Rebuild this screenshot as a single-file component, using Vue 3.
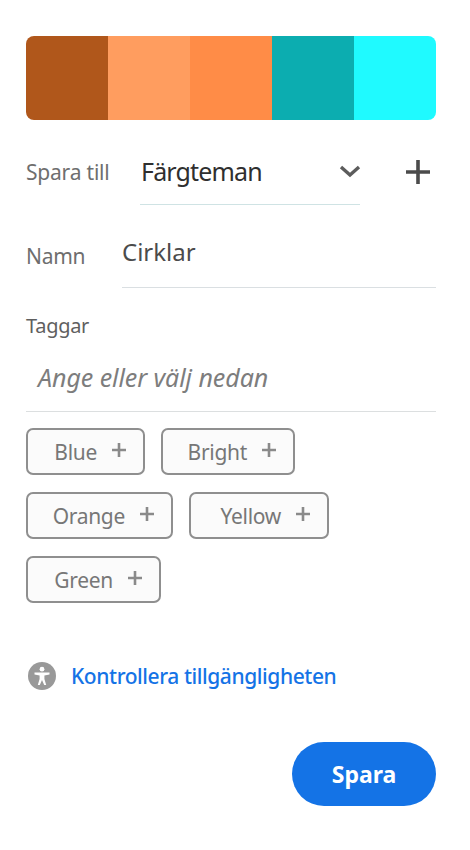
<script setup>
const swatches = ['#b0571b', '#ff9d5f', '#ff8c47', '#0cadb0', '#1ffaff']
const tagRows = [
  [{ name: 'Blue', w: 119 }, { name: 'Bright', w: 134 }],
  [{ name: 'Orange', w: 147 }, { name: 'Yellow', w: 140 }],
  [{ name: 'Green', w: 135 }]
]
</script>

<template>
  <main class="panel">
    <div class="swatches">
      <div v-for="c in swatches" :key="c" class="swatch" :style="{ background: c }"></div>
    </div>

    <div class="save-row">
      <span class="label save-label">Spara till</span>
      <div class="select">
        <span class="select-text">Färgteman</span>
        <svg class="chevron" width="22" height="14" viewBox="0 0 22 14">
          <path d="M2 3 L11 11 L20 3" fill="none" stroke="#5c5c5c" stroke-width="3.4" />
        </svg>
      </div>
      <svg class="add" width="26" height="26" viewBox="0 0 26 26">
        <path d="M13 1 V25 M1 13 H25" fill="none" stroke="#4b4b4b" stroke-width="3.6" />
      </svg>
    </div>

    <div class="name-row">
      <span class="label name-label">Namn</span>
      <div class="name-field">Cirklar</div>
    </div>

    <div class="label tags-label">Taggar</div>
    <div class="tag-input">Ange eller välj nedan</div>

    <div class="tags">
      <div v-for="(row, i) in tagRows" :key="i" class="tag-row">
        <div v-for="t in row" :key="t.name" class="tag" :style="{ width: t.w + 'px' }">
          <span class="tag-name">{{ t.name }}</span>
          <svg width="16" height="16" viewBox="0 0 16 16">
            <path d="M8 1 V15 M1 8 H15" fill="none" stroke="#8a8a8a" stroke-width="2.6" />
          </svg>
        </div>
      </div>
    </div>

    <div class="a11y">
      <svg width="30" height="30" viewBox="0 0 30 30">
        <circle cx="15" cy="15" r="14" fill="#999" />
        <circle cx="15" cy="8.2" r="2.4" fill="#fff" />
        <path d="M7.5 11.6 H22.5 V13.5 L17.4 14.6 V18 L19.2 24 H17.2 L15 19 L12.8 24 H10.8 L12.6 18 V14.6 L7.5 13.5 Z" fill="#fff" />
      </svg>
      <span class="link">Kontrollera tillgängligheten</span>
    </div>

    <div class="actions">
      <button class="save">Spara</button>
    </div>
  </main>
</template>

<style>
html, body { margin: 0; background: #fff; }
</style>

<style scoped>
.panel {
  box-sizing: border-box;
  width: 470px;
  height: 850px;
  padding: 36px 34px 0 26px;
  font-family: "Noto Sans", "Open Sans", sans-serif;
  background: #fff;
  overflow: hidden;
}
.swatches { display: flex; height: 84px; border-radius: 8px; overflow: hidden; }
.swatch { flex: 1; }
.label { color: #6e6e6e; font-size: 21px; line-height: 28px; }
.save-row { display: flex; align-items: flex-start; margin-top: 32px; height: 53px; }
.save-label { width: 114px; margin-top: 6px; flex: none; letter-spacing: -0.2px; }
.select {
  box-sizing: border-box;
  width: 220px;
  height: 53px;
  display: flex;
  align-items: center;
  justify-content: space-between;
  border-bottom: 1px solid #cfe3e4;
  padding: 0 0 15px 1px;
}
.select-text { font-size: 25px; color: #2f2f2f; letter-spacing: -0.85px; }
.chevron { margin: 0 -1px 0 0; }
.add { margin: 7px 0 0 45px; }
.name-row { display: flex; align-items: flex-start; margin-top: 29px; height: 54px; }
.name-label { width: 96px; margin-top: 8px; flex: none; letter-spacing: -0.3px; }
.name-field {
  box-sizing: border-box;
  flex: 1;
  height: 54px;
  border-bottom: 1px solid #dadfe2;
  font-size: 24px;
  line-height: 36px;
  color: #4b4b4b;
}
.tags-label { margin-top: 24px; color: #5f5f5f; letter-spacing: -0.3px; font-size: 20px; }
.tag-input {
  box-sizing: border-box;
  height: 70px;
  margin-top: 2px;
  padding: 17px 0 0 12px;
  border-bottom: 1px solid #dcdfe0;
  font-size: 25px;
  line-height: 36px;
  font-style: italic;
  color: #7d7d7d;
  letter-spacing: -0.07px;
}
.tags { display: flex; flex-direction: column; gap: 17px; margin-top: 16px; }
.tag-row { display: flex; gap: 16px; }
.tag {
  box-sizing: border-box;
  height: 47px;
  display: flex;
  align-items: center;
  justify-content: flex-end;
  gap: 14px;
  padding-right: 16px;
  border: 2px solid #8f8f8f;
  border-radius: 7px;
  background: #fbfbfb;
  color: #777;
  font-size: 21px;
  letter-spacing: -0.3px;
}
.tag-name { margin-top: 1px; }
.tag svg { margin-top: -3px; }
.a11y { display: flex; align-items: center; gap: 14px; margin-top: 58px; margin-left: 1px; }
.link { color: #1473e6; font-size: 21px; letter-spacing: -0.42px; font-weight: 500; }
.actions { display: flex; justify-content: flex-end; margin-top: 51px; }
.save {
  width: 144px;
  height: 64px;
  border: 0;
  border-radius: 32px;
  background: #1473e6;
  color: #fff;
  font-family: inherit;
  font-size: 23px;
  font-weight: 700;
}
</style>
